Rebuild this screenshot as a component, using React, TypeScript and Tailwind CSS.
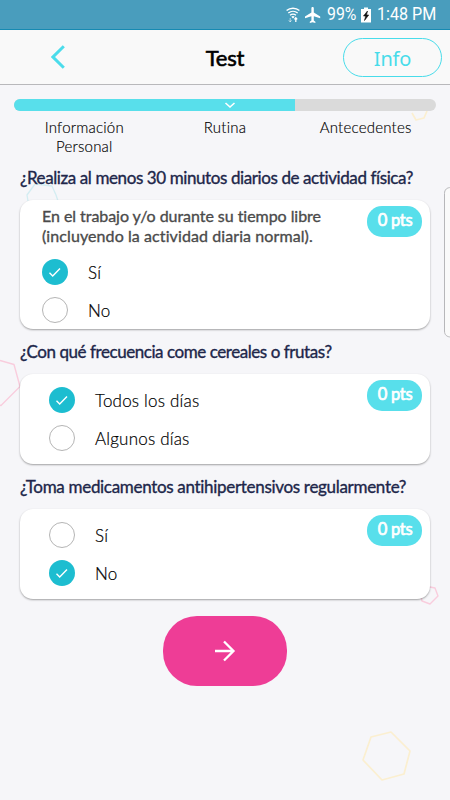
import clsx from "clsx";

const steps = ["Información Personal", "Rutina", "Antecedentes"];

const questions = [
  {
    title: "¿Realiza al menos 30 minutos diarios de actividad física?",
    titleClass: "tracking-[-0.4px]",
    hint: ["En el trabajo y/o durante su tiempo libre", "(incluyendo la actividad diaria normal)."],
    options: ["Sí", "No"],
    selected: 0,
  },
  {
    title: "¿Con qué frecuencia come cereales o frutas?",
    titleClass: "tracking-[-0.44px]",
    options: ["Todos los días", "Algunos días"],
    selected: 0,
  },
  {
    title: "¿Toma medicamentos antihipertensivos regularmente?",
    titleClass: "tracking-[-0.31px]",
    options: ["Sí", "No"],
    selected: 1,
  },
];

function StatusBar() {
  return (
    <div className="flex h-[30px] items-center justify-end border-b border-[#168ab2] bg-[#499dbd] pr-[13px] font-['Roboto',sans-serif] text-white">
      <svg width="14" height="16" viewBox="0 0 14 16" fill="none" stroke="currentColor" className="mr-[5px]">
        <path d="M.6 3.6C4.2.4 9.8.4 13.4 3.6M2.3 6C5 3.8 9 3.8 11.7 6M4 8.3c1.8-1.4 4.2-1.4 6 0" strokeWidth="1.4" />
        <path d="M5.3 9.7 7 11.5l1.7-1.8c-1-.8-2.4-.8-3.4 0Z" fill="currentColor" stroke="none" />
        <path d="M9.8 15v-4M8.4 12.4l1.4-1.7 1.4 1.7" strokeWidth="1.3" />
        <path d="M4.2 11v4M2.8 13.4l1.4 1.5 1.4-1.5" strokeWidth="1" opacity=".6" />
      </svg>
      <svg width="16" height="16" viewBox="2 2 20 20" fill="currentColor" className="mr-[6px]">
        <path d="M21 16v-2l-8-5V3.5c0-.83-.67-1.5-1.5-1.5S10 2.67 10 3.5V9l-8 5v2l8-2.5V19l-2 1.5V22l3.5-1 3.5 1v-1.5L13 19v-5.5l8 2.5z" />
      </svg>
      <span className="inline-block w-[31px] pt-px whitespace-nowrap">
        <span className="inline-block origin-left scale-x-[0.88] text-[18px] leading-5">99%</span>
      </span>
      <svg width="10" height="16" viewBox="0 0 10 16" className="mr-[6px] ml-[3px]">
        <path d="M0 2h3V.5h4V2h3v13.5H0Z" fill="white" />
        <path d="M6.5 4 2.5 9h2.2L3.5 13.5 7.7 8H5.5Z" fill="#111" stroke="#111" strokeWidth=".6" />
      </svg>
      <span className="inline-block w-[60px] pt-px whitespace-nowrap">
        <span className="inline-block origin-left scale-x-[0.895] text-[18px] leading-5">1:48 PM</span>
      </span>
    </div>
  );
}

function Header() {
  return (
    <header className="grid h-[55px] grid-cols-3 items-center border-b border-[#b8b8bb] bg-[#f9f9f9]">
      <svg width="14" height="24" viewBox="0 0 14 24" fill="none" stroke="#4bdceb" strokeWidth="3" className="ml-[51px]">
        <path d="M12.8 1.3 2 12l10.8 10.7" />
      </svg>
      <h1 className="text-center text-[22px] tracking-[-0.2px] text-black [-webkit-text-stroke:0.6px_black]">Test</h1>
      <button className="mr-2 flex h-[39px] w-[99px] items-center justify-center justify-self-end rounded-full border border-[#48dcea] pt-[3px] font-['Noto_Sans',sans-serif] text-[20px] tracking-[-0.2px] text-[#48dcea]">
        Info
      </button>
    </header>
  );
}

function Progress() {
  return (
    <div className="px-[14px] pt-[14px]">
      <div className="h-3 overflow-hidden rounded-full bg-[#dadada]">
        <div className="flex h-full w-[281px] items-center bg-[#58dfeb]">
          <svg width="12" height="8" viewBox="0 0 12 8" fill="none" stroke="white" strokeWidth="1.6" className="ml-[210px]">
            <path d="m1.5 2 4.5 4 4.5-4" />
          </svg>
        </div>
      </div>
      <div className="grid h-[44px] grid-cols-3 pt-[7px]">
        {steps.map((step) => (
          <p
            key={step}
            className="px-6 text-center text-[15px] leading-[19px] font-light tracking-[0.22px] text-black [-webkit-text-stroke:0.15px_black]"
          >
            {step}
          </p>
        ))}
      </div>
    </div>
  );
}

function Radio({ checked }: { checked: boolean }) {
  return (
    <span
      className={clsx(
        "flex size-[26px] items-center justify-center rounded-full",
        checked ? "bg-[#1dbdd0]" : "border border-[#b5b5b5] bg-white"
      )}
    >
      {checked && (
        <svg width="14" height="12" viewBox="0 0 14 12" fill="none" stroke="white" strokeWidth="1.4">
          <path d="m1.5 6.8 3.2 3.2L12 2.4" />
        </svg>
      )}
    </span>
  );
}

function Question({ question }: { question: (typeof questions)[number] }) {
  return (
    <section>
      <h2
        className={clsx(
          "flex h-[45px] items-center pl-5 text-[17px] whitespace-nowrap text-[#20264a] [-webkit-text-stroke:0.35px_#20264a]",
          question.titleClass
        )}
      >
        {question.title}
      </h2>
      <div
        className={clsx(
          "mx-5 flex justify-between rounded-[13px] bg-white pr-2 shadow-[0_1px_2px_rgba(0,0,0,0.35)]",
          question.hint ? "h-[129px] pt-[6px] pl-[22px]" : "h-[90px] pt-[6px] pl-[29px]"
        )}
      >
        <div>
          {question.hint && (
            <p className="mb-[13px] text-[16px] leading-5 whitespace-nowrap text-[#4b4b4b] [-webkit-text-stroke:0.35px_#4b4b4b] [font-variant-ligatures:none]">
              <span className="tracking-[-0.05px]">{question.hint[0]}</span>
              <br />
              <span className="tracking-[0.09px]">{question.hint[1]}</span>
            </p>
          )}
          <div className={question.hint ? "" : "pt-[6.5px]"}>
            {question.options.map((option, i) => (
              <label
                key={option}
                className="mb-3 flex h-[26px] items-center gap-5 text-[17px] font-light tracking-[0.2px] text-black [-webkit-text-stroke:0.2px_black]"
              >
                <Radio checked={question.selected === i} />
                <span className="pt-[2px]">{option}</span>
              </label>
            ))}
          </div>
        </div>
        <span className="flex h-[31px] w-[55px] shrink-0 items-center justify-center rounded-[15px] bg-[#58dfeb] pb-[3px] pl-px text-[16.5px] tracking-[-0.25px] text-white [-webkit-text-stroke:0.7px_white]">
          0 pts
        </span>
      </div>
    </section>
  );
}

function Backdrop() {
  return (
    <svg width="450" height="800" viewBox="0 0 450 800" fill="none" strokeLinejoin="round" className="absolute inset-0">
      <g stroke="#fbefd0" strokeWidth="1.7">
        <path d="m371 737 20-5 19 19-6 23-22 6-19-20Z" />
        <path d="m412 113 4 7 8-2 3-7" />
      </g>
      <path d="m28 201-1-6 8-11 17 2 4 9 2 6" stroke="#d3edf2" strokeWidth="1.3" />
      <g stroke="#f9cddd" strokeWidth="1.4">
        <path d="m0 360.5 14 4 6 22-19 19-2-.5" />
        <path d="m430 587 5 1 3 8-8 8-8-3-2-8Z" />
      </g>
      <path d="M451 187.5c-4 0-6.5 2-6.5 6V331c0 4 2.5 6 6.5 6" fill="#fafafa" stroke="#b7b7ba" />
    </svg>
  );
}

export default function App() {
  return (
    <div className="relative h-[800px] w-[450px] overflow-hidden bg-[#f6f6f9] font-['Lato',sans-serif]">
      <Backdrop />
      <div className="relative">
        <StatusBar />
        <Header />
        <Progress />
        {questions.map((question) => (
          <Question key={question.title} question={question} />
        ))}
        <button className="mx-auto mt-[17px] flex h-[70px] w-[124px] items-center justify-center rounded-[34px] bg-[#ee3d96]">
          <svg width="22" height="22" viewBox="0 0 22 22" fill="none" stroke="white" strokeWidth="2.3">
            <path d="M1 11h18M10 1.5l9.5 9.5-9.5 9.5" />
          </svg>
        </button>
      </div>
    </div>
  );
}
